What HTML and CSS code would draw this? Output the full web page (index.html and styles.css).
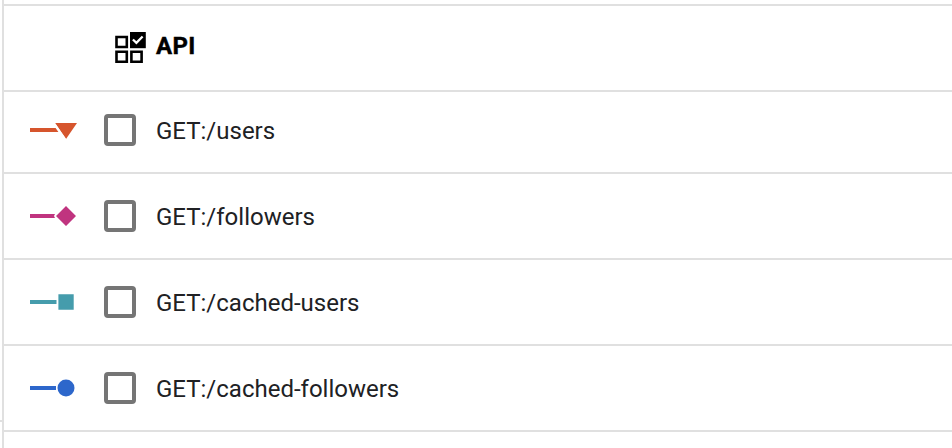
FILE: index.html
```html
<!DOCTYPE html>
<html lang="en">
<head>
<meta charset="utf-8">
<title>API</title>
<link rel="stylesheet" href="styles.css">
</head>
<body>
<div class="panel">
  <div class="gutter"></div>
  <div class="table">
    <div class="row row-previous"></div>
    <div class="row row-header">
      <svg class="header-icon" width="32" height="34" viewBox="0 0 32 34">
        <g fill="none" stroke="#000" stroke-width="2.6">
          <path d="M2.5 7h10.3v10H2.5zM2.5 21.7h10.3v10H2.5zM17.4 21.7h10.2v10H17.4z"/>
        </g>
        <path d="M16 2h15.8v16.2H16z"/>
        <path d="M18.9 9.5l3.5 3.3 6.2-6.3" fill="none" stroke="#fff" stroke-width="2.3"/>
      </svg>
      <span class="title">API</span>
    </div>
    <label class="row row-first">
      <svg class="marker" width="50" height="32" viewBox="0 0 50 32">
        <path d="M0 14h25.6l2.8 4H0zM25 9h22L36 25z" fill="#d6552d"/>
        <path d="M24.4 9l11.1 16" stroke="#fff" stroke-width="1.1"/>
      </svg>
      <input class="check" type="checkbox"><span class="name">GET:/users</span>
    </label>
    <label class="row">
      <svg class="marker" width="50" height="32" viewBox="0 0 50 32">
        <path d="M0 14h25l-1 2 1 2H0zM36 6l10 10-10 10-10-10z" fill="#c0347f"/>
      </svg>
      <input class="check" type="checkbox"><span class="name">GET:/followers</span>
    </label>
    <label class="row">
      <svg class="marker" width="50" height="32" viewBox="0 0 50 32">
        <path d="M0 14h26.5v4H0zM28.4 8.3h15.3v15.4H28.4z" fill="#459cac"/>
      </svg>
      <input class="check" type="checkbox"><span class="name">GET:/cached-users</span>
    </label>
    <label class="row">
      <svg class="marker" width="50" height="32" viewBox="0 0 50 32">
        <path d="M0 14h26v4H0z" fill="#2d67cb"/>
        <circle cx="36" cy="16" r="8.5" fill="#2d67cb"/>
      </svg>
      <input class="check" type="checkbox"><span class="name">GET:/cached-followers</span>
    </label>
  </div>
</div>
</body>
</html>
```
FILE: styles.css
```css
* {
  box-sizing: border-box;
}

body {
  margin: 0;
  background: #fff;
  color: #202124;
  font: 24px/32px Roboto, sans-serif;
}

.panel {
  display: flex;
  height: 448px;
  overflow: hidden;
}

.gutter {
  width: 2px;
  height: 422px;
  border-bottom: 2px solid #e0e0e0;
}

.table {
  flex: 1;
  border-left: 2px solid #e0e0e0;
}

.row {
  display: flex;
  align-items: flex-start;
  height: 86px;
  padding: 26px 0 0 26px;
  border-bottom: 2px solid #e0e0e0;
}

.row-previous {
  height: 6px;
  padding: 0;
}

.row-header {
  padding: 24px 0 0 110px;
  color: #000;
}

.row-first {
  height: 82px;
  padding-top: 22px;
}

.header-icon {
  margin-right: 10px;
}

.title {
  font-weight: 700;
  letter-spacing: 0.3px;
  -webkit-text-stroke: 0.4px #000;
}

.name {
  padding-top: 1px;
}

.marker {
  margin-right: 24px;
}

.check {
  appearance: none;
  width: 32px;
  height: 32px;
  margin: 0 20px 0 0;
  border: 4px solid #757575;
  border-radius: 4px;
}
```
